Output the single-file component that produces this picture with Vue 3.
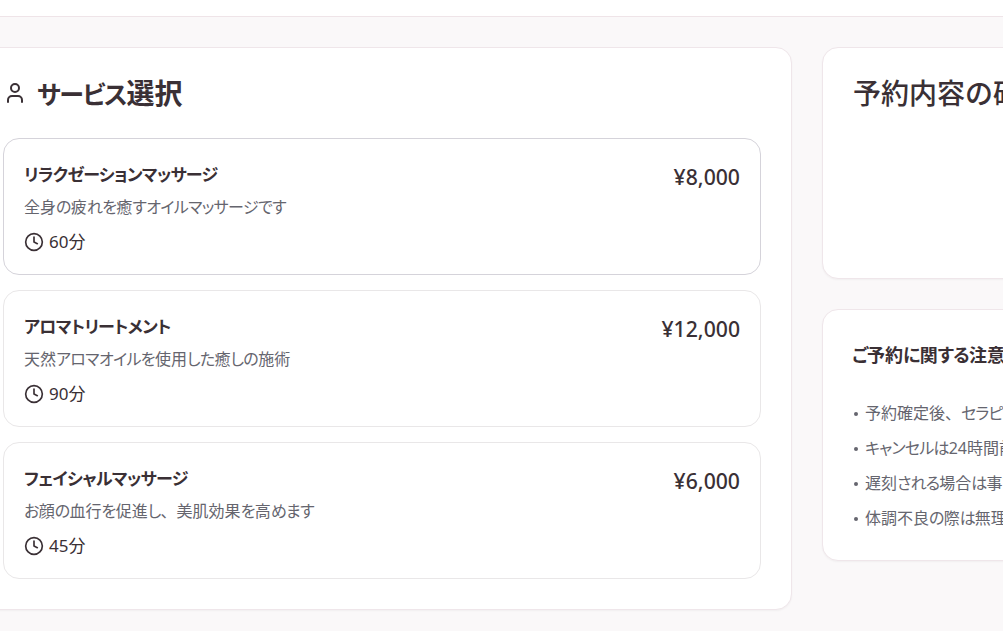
<script setup>
const services = [
  { name: 'リラクゼーションマッサージ', desc: '全身の疲れを癒すオイルマッサージです', time: '60分', price: '¥8,000', selected: true },
  { name: 'アロマトリートメント', desc: '天然アロマオイルを使用した癒しの施術', time: '90分', price: '¥12,000' },
  { name: 'フェイシャルマッサージ', desc: 'お顔の血行を促進し、美肌効果を高めます', time: '45分', price: '¥6,000' },
]
const notes = [
  '予約確定後、セラピストよりご連絡いたします',
  'キャンセルは24時間前まで無料です',
  '遅刻される場合は事前にご連絡ください',
  '体調不良の際は無理をなさらずご相談ください',
]
const runs = (text) =>
  text.match(/[\u3040-\u30ff]+|[^\u3040-\u30ff]+/g).map((t) => ({ t, kana: /[\u3040-\u30ff]/.test(t) }))
</script>

<template>
  <div class="page">
    <header class="topbar"></header>
    <main class="layout">
      <section class="panel left">
        <h2 class="heading">
          <svg class="user" viewBox="0 0 24 24" fill="none" stroke="currentColor" stroke-width="2" stroke-linecap="round" stroke-linejoin="round">
            <path d="M19 21v-2a4 4 0 0 0-4-4H9a4 4 0 0 0-4 4v2" />
            <circle cx="12" cy="7" r="4" />
          </svg>
          <span><span v-for="(r, i) in runs('サービス選択')" :key="i" :class="{ kana: r.kana }">{{ r.t }}</span></span>
        </h2>
        <div class="list">
          <article v-for="s in services" :key="s.name" class="service" :class="{ selected: s.selected }">
            <div class="info">
              <h3 class="name"><span v-for="(r, i) in runs(s.name)" :key="i" :class="{ kana: r.kana }">{{ r.t }}</span></h3>
              <p class="desc"><span v-for="(r, i) in runs(s.desc)" :key="i" :class="{ kana: r.kana }">{{ r.t }}</span></p>
              <div class="time">
                <svg class="clock" viewBox="0 0 24 24" fill="none" stroke="currentColor" stroke-width="2" stroke-linecap="round" stroke-linejoin="round">
                  <circle cx="12" cy="12" r="10" />
                  <path d="M12 6v6l4 2" />
                </svg>
                <span>{{ s.time }}</span>
              </div>
            </div>
            <div class="price">{{ s.price }}</div>
          </article>
        </div>
      </section>
      <aside class="side">
        <section class="panel summary">
          <h2 class="summary-title">予約内容の確認</h2>
        </section>
        <section class="panel notes">
          <h3 class="notes-title"><span v-for="(r, i) in runs('ご予約に関する注意事項')" :key="i" :class="{ kana: r.kana }">{{ r.t }}</span></h3>
          <ul class="note-list">
            <li v-for="n in notes" :key="n"><span class="dot"></span><span><span v-for="(r, i) in runs(n)" :key="i" :class="{ kana: r.kana }">{{ r.t }}</span></span></li>
          </ul>
        </section>
      </aside>
    </main>
  </div>
</template>

<style>
html, body { margin: 0; background: #faf8f9; overflow: hidden; }
</style>

<style scoped>
.page {
  width: 1003px;
  height: 631px;
  overflow: hidden;
  background: #faf8f9;
  color: #3a3035;
  font-family: "Noto Sans", "Noto Sans CJK JP", sans-serif;
}
.kana { font-feature-settings: "palt"; }
.topbar {
  height: 16px;
  background: #fff;
  border-bottom: 1px solid #efe4e8;
}
.layout {
  display: flex;
  gap: 30px;
  width: 1260px;
  margin-left: -28px;
  padding-top: 30px;
  align-items: flex-start;
}
.panel {
  background: #fff;
  border: 1px solid #efe6ea;
  border-radius: 16px;
  box-sizing: border-box;
  box-shadow: 0 1px 2px rgba(0, 0, 0, 0.04);
}
.left {
  width: 820px;
  height: 563px;
  padding: 26px 30px 30px;
  flex: none;
}
.heading {
  display: flex;
  align-items: center;
  gap: 10px;
  margin: 0 0 26px;
  height: 38px;
  font-size: 28px;
  font-weight: 600;
  line-height: 38px;
}
.heading .kana { font-size: 25px; letter-spacing: -0.05em; }
.user { width: 24px; height: 24px; flex: none; }
.list { display: flex; flex-direction: column; gap: 15px; }
.service {
  display: flex;
  justify-content: space-between;
  height: 137px;
  box-sizing: border-box;
  padding: 20px;
  background: #fff;
  border: 1px solid #e9e7e8;
  border-radius: 16px;
}
.service.selected { border-color: #d5d3da; }
.name { margin: 1px 0 0; font-size: 17px; font-weight: 600; line-height: 30px; }
.name .kana { letter-spacing: -0.04em; }
.desc { margin: 4px 0 0; font-size: 16px; line-height: 26px; color: #65656e; }
.desc .kana { letter-spacing: -0.04em; }
.time { display: flex; align-items: center; gap: 5px; margin-top: 10px; font-size: 17px; line-height: 24px; }
.clock { width: 20px; height: 20px; }
.price { font-size: 21.2px; font-weight: 500; line-height: 36px; }
.side { display: flex; flex-direction: column; gap: 30px; width: 410px; flex: none; }
.summary { height: 232px; padding: 28px 30px; }
.summary-title { margin: 0; font-size: 28px; font-weight: 500; line-height: 34px; }
.notes { height: 252px; padding: 30px 29px; }
.notes-title { margin: 0 0 26px; font-size: 18px; font-weight: 600; line-height: 30px; }
.notes-title .kana { letter-spacing: -0.04em; }
.note-list { list-style: none; margin: 0; padding: 0; }
.note-list li { display: flex; align-items: center; gap: 7px; font-size: 16px; line-height: 35px; color: #65656e; white-space: nowrap; }
.note-list .kana { letter-spacing: -0.05em; }
.dot { width: 4px; height: 4px; margin-left: 2px; border-radius: 50%; background: #65656e; flex: none; }
</style>
